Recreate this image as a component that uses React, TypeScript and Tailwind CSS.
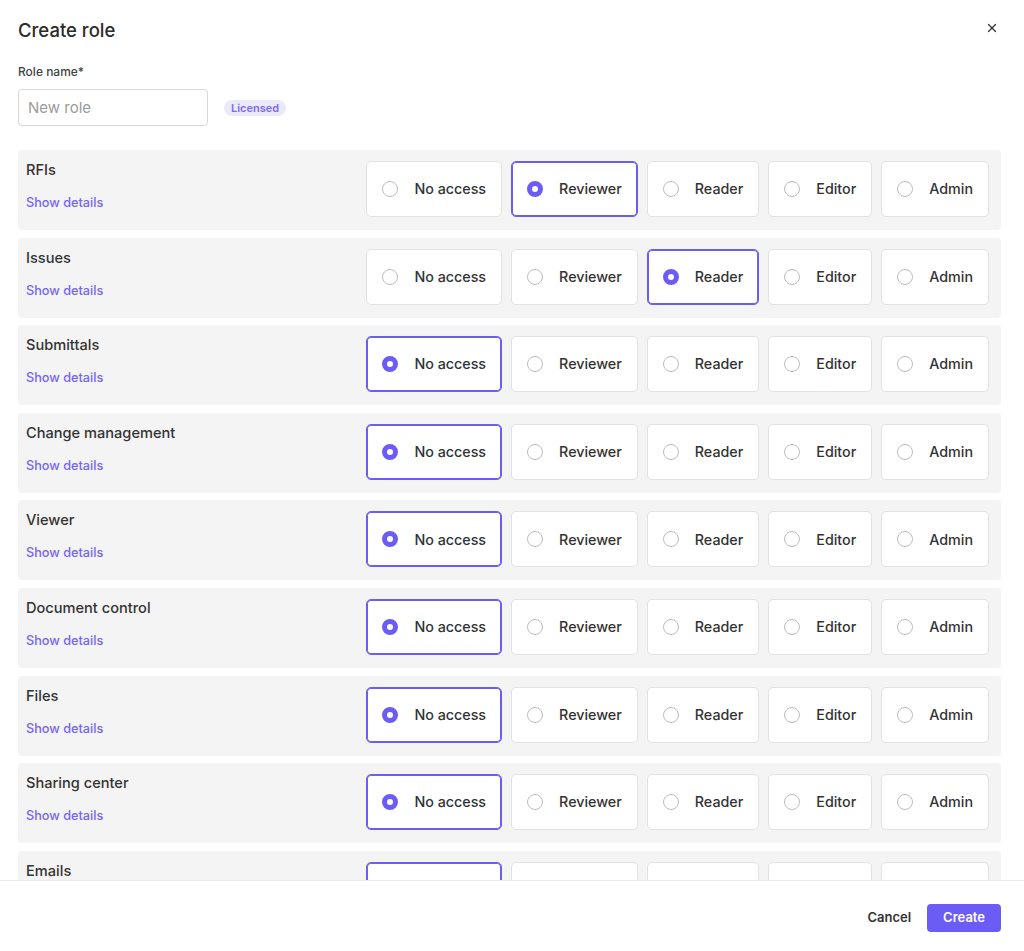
import { X } from "lucide-react";

const levels = ["No access", "Reviewer", "Reader", "Editor", "Admin"];

const modules: { name: string; value: string }[] = [
  { name: "RFIs", value: "Reviewer" },
  { name: "Issues", value: "Reader" },
  { name: "Submittals", value: "No access" },
  { name: "Change management", value: "No access" },
  { name: "Viewer", value: "No access" },
  { name: "Document control", value: "No access" },
  { name: "Files", value: "No access" },
  { name: "Sharing center", value: "No access" },
  { name: "Emails", value: "No access" },
];

function Option({ label, selected }: { label: string; selected: boolean }) {
  return (
    <div
      className={
        selected
          ? "flex h-14 items-center gap-4 rounded-[5px] border border-[#6b5cf6] bg-white pl-[15px] pr-[15px] ring-1 ring-inset ring-[#6b5cf6]"
          : "flex h-14 items-center gap-4 rounded-[5px] border border-[#e2e2e2] bg-white pl-[15px] pr-[15px]"
      }
    >
      {selected ? (
        <span className="h-4 w-4 shrink-0 rounded-full border-[5px] border-[#6b5cf6] bg-white" />
      ) : (
        <span className="h-4 w-4 shrink-0 rounded-full border-[1.5px] border-[#bdbdbd] bg-white" />
      )}
      <span className="whitespace-nowrap text-[14.3px] font-medium text-[#333]">{label}</span>
    </div>
  );
}

function ModuleRow({ name, value }: { name: string; value: string }) {
  return (
    <div className="flex h-20 shrink-0 items-start justify-between rounded-[4px] bg-[#f4f4f4] pb-3 pl-2 pr-3 pt-[11px]">
      <div className="flex flex-col">
        <span className="-mt-px text-[14.6px] font-medium leading-5 text-[#333]">{name}</span>
        <span className="mt-[13px] text-[12.7px] font-medium leading-5 text-[#7464f4]">Show details</span>
      </div>
      <div className="flex gap-[9px]">
        {levels.map((l) => (
          <Option key={l} label={l} selected={l === value} />
        ))}
      </div>
    </div>
  );
}

export default function App() {
  return (
    <div className="flex h-[951px] flex-col overflow-hidden bg-white font-['Inter',sans-serif]">
      <div className="flex items-center justify-between pl-[18px] pr-[25px] pt-[18px]">
        <h1 className="text-[18.5px] font-medium leading-6 text-[#2b2b2b]">Create role</h1>
        <X size={14} strokeWidth={2.2} className="-mt-[4px] text-[#333]" />
      </div>
      <div className="px-[18px] pt-[22px]">
        <div className="text-[12px] font-medium leading-4 text-[#444]">Role name*</div>
        <div className="mt-[9px] flex items-center gap-4">
          <input
            placeholder="New role"
            className="h-[37px] w-[190px] rounded-[4px] border border-[#d8d8d8] px-[9px] text-[15px] text-[#333] placeholder:text-[#9b9b9b] outline-none"
          />
          <span className="rounded-full bg-[#ebe9fb] px-[7px] text-[11px] font-semibold leading-4 text-[#7a6cf2]">
            Licensed
          </span>
        </div>
      </div>
      <div className="mt-6 flex min-h-0 flex-1 flex-col gap-[7.6px] overflow-hidden pl-[18px] pr-[23px]">
        {modules.map((m) => (
          <ModuleRow key={m.name} name={m.name} value={m.value} />
        ))}
      </div>
      <div className="flex h-[71px] shrink-0 items-center justify-end gap-4 border-t border-[#ececec] pr-[23px] pt-[3px]">
        <button className="text-[13px] font-semibold text-[#333]">Cancel</button>
        <button className="h-7 rounded-[4px] bg-[#6b5cf6] px-4 text-[13px] font-semibold text-white">Create</button>
      </div>
    </div>
  );
}
